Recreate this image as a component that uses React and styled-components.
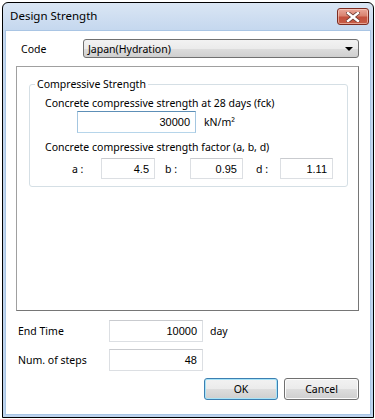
import React from "react";
import styled, { createGlobalStyle, css } from "styled-components";

const GlobalStyle = createGlobalStyle`
  html, body {
    margin: 0;
    padding: 0;
    background: #ffffff;
  }
  body {
    font-family: "Noto Sans", "Open Sans", "DejaVu Sans", sans-serif;
    font-size: 10.5px;
    color: #000;
  }
  * {
    box-sizing: border-box;
  }
`;

const Window = styled.div`
  margin: 2px 0 0 2px;
  width: 372px;
  height: 416px;
  border: 1px solid #000;
  border-radius: 6px 6px 0 0;
  background: linear-gradient(#dae6f4, #c4d7ee 28px, #bcd3ee);
  padding: 0 2px 2px 2px;
  display: flex;
  flex-direction: column;
`;

const TitleBar = styled.div`
  height: 27px;
  display: flex;
  align-items: center;
  justify-content: space-between;
  padding: 0 2px 2px 5px;
`;

const Title = styled.span`
  font-size: 11.5px;
`;

const CloseButton = styled.button`
  width: 32px;
  height: 17px;
  margin-top: 2px;
  border: 1px solid #7d2d22;
  border-radius: 3px;
  background: linear-gradient(#eaa89a, #d98370 45%, #c4503d 55%, #c65d47);
  box-shadow: inset 0 0 0 1px rgba(255, 220, 210, 0.55);
  display: flex;
  align-items: center;
  justify-content: center;
  padding: 0;
`;

const Client = styled.div`
  flex: 1;
  background: #ffffff;
  border: 1px solid #a9c5e4;
  padding: 8px 11px 0 10px;
  display: flex;
  flex-direction: column;
`;

const FieldRow = styled.div`
  display: flex;
  align-items: center;
  height: ${(p) => p.$h || 22}px;
  margin-top: ${(p) => p.$top || 0}px;
`;

const Label = styled.span`
  width: ${(p) => p.$w}px;
  padding-left: ${(p) => p.$pad || 0}px;
  margin-left: ${(p) => p.$left || 0}px;
  flex-shrink: 0;
  white-space: nowrap;
`;

const Select = styled.div`
  width: 278px;
  height: 19px;
  border: 1px solid #707070;
  border-radius: 3px;
  background: linear-gradient(#f2f2f2, #ebebeb 50%, #dddddd 51%, #cfcfcf);
  display: flex;
  align-items: center;
  justify-content: space-between;
  padding: 0 5px 0 4px;
`;

const Arrow = styled.span`
  width: 0;
  height: 0;
  border-left: 4px solid transparent;
  border-right: 4px solid transparent;
  border-top: 4px solid #000;
  margin-top: 1px;
`;

const Panel = styled.div`
  margin-top: 8px;
  height: 245px;
  border: 1px solid #a0a0a0;
  border-right-color: #767676;
  border-bottom-color: #767676;
  padding: 9px 10px 0 12px;
`;

const Group = styled.fieldset`
  margin: 0;
  padding: 0 10px 7px 15px;
  border: 1px solid #d5dfe5;
  border-radius: 3px;
`;

const Legend = styled.legend`
  margin-left: -10px;
  padding: 0 2px;
  line-height: 16px;
`;

const Line = styled.div`
  line-height: 16px;
  margin-top: ${(p) => p.$top || 0}px;
`;

const Input = styled.div`
  width: ${(p) => p.$w}px;
  height: ${(p) => p.$h || 22}px;
  margin-left: ${(p) => p.$left || 0}px;
  flex-shrink: 0;
  border: 1px solid #dcdfe3;
  border-top-color: #c9cbcf;
  background: #fff;
  display: flex;
  align-items: center;
  justify-content: flex-end;
  padding-right: 5px;
  font-family: "Liberation Sans", Arial, sans-serif;
  font-size: 11px;
  ${(p) =>
    p.$hover &&
    css`
      border-color: #a4c6e0;
      border-top-color: #5d8fb7;
      border-bottom-color: #b6d5ea;
    `}
`;

const Unit = styled.span`
  margin-left: ${(p) => p.$left || 8}px;
`;

const Spacer = styled.div`
  flex: 1;
`;

const ButtonRow = styled.div`
  display: flex;
  justify-content: flex-end;
  gap: 6px;
  margin-top: 7px;
`;

const Button = styled.button`
  width: ${(p) => p.$w}px;
  height: 22px;
  border-radius: 3px;
  border: 1px solid ${(p) => (p.$default ? "#3c7fb1" : "#707070")};
  background: linear-gradient(#f2f2f2, #ebebeb 50%, #dddddd 51%, #cfcfcf);
  box-shadow: inset 0 0 0 1px ${(p) => (p.$default ? "#a8e4f8" : "#fcfcfc")};
  font-family: inherit;
  font-size: 10.5px;
  color: #000;
  padding: 0;
`;

function CloseIcon() {
  return (
    <svg width="14" height="10" viewBox="0 0 14 10">
      <path
        d="M2 1 L12 9 M12 1 L2 9"
        stroke="#6b3a33"
        strokeWidth="4"
        strokeLinecap="square"
      />
      <path
        d="M2 1 L12 9 M12 1 L2 9"
        stroke="#ffffff"
        strokeWidth="2.4"
        strokeLinecap="square"
      />
    </svg>
  );
}

export default function App() {
  return (
    <>
      <GlobalStyle />
      <Window>
        <TitleBar>
          <Title>Design Strength</Title>
          <CloseButton aria-label="Close">
            <CloseIcon />
          </CloseButton>
        </TitleBar>
        <Client>
          <FieldRow $h={19}>
            <Label $w={67} $pad={5}>Code</Label>
            <Select>
              <span>Japan(Hydration)</span>
              <Arrow />
            </Select>
          </FieldRow>

          <Panel>
            <Group>
              <Legend>Compressive Strength</Legend>
              <Line $top={3}>Concrete compressive strength at 28 days (fck)</Line>
              <FieldRow>
                <Input $w={119} $left={32} $hover>30000</Input>
                <Unit>kN/m²</Unit>
              </FieldRow>
              <Line $top={6}>Concrete compressive strength factor (a, b, d)</Line>
              <FieldRow $h={21} $top={3}>
                <Label $w={29} $left={27}>a :</Label>
                <Input $w={54} $h={21}>4.5</Input>
                <Label $w={25} $left={10}>b :</Label>
                <Input $w={53} $h={21}>0.95</Input>
                <Label $w={24} $left={13}>d :</Label>
                <Input $w={53} $h={21}>1.11</Input>
              </FieldRow>
            </Group>
          </Panel>

          <FieldRow $top={9}>
            <Label $w={93} $pad={2}>End Time</Label>
            <Input $w={94}>10000</Input>
            <Unit $left={7}>day</Unit>
          </FieldRow>
          <FieldRow $top={7}>
            <Label $w={93} $pad={2}>Num. of steps</Label>
            <Input $w={94}>48</Input>
          </FieldRow>
          <ButtonRow>
            <Button $w={74} $default>OK</Button>
            <Button $w={75}>Cancel</Button>
          </ButtonRow>
          <Spacer />
        </Client>
      </Window>
    </>
  );
}
